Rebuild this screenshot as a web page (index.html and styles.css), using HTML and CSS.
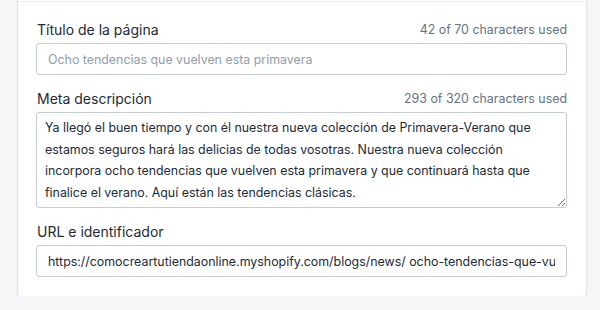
FILE: index.html
```html
<!DOCTYPE html>
<html lang="es">
<head>
<meta charset="UTF-8">
<title>SEO del artículo</title>
<link rel="stylesheet" href="styles.css">
</head>
<body>
    <div class="card">
        <div class="card-section">
            <div class="field">
                <div class="field-label">
                    <label for="seo-title">Título de la página</label>
                    <span class="counter">42 of 70 characters used</span>
                </div>
                <input id="seo-title" class="text-input" type="text" placeholder="Ocho tendencias que vuelven esta primavera">
            </div>

            <div class="field">
                <div class="field-label">
                    <label for="seo-description">Meta descripción</label>
                    <span class="counter">293 of 320 characters used</span>
                </div>
                <textarea id="seo-description" class="text-input text-area" rows="4">Ya llegó el buen tiempo y con él nuestra nueva colección de Primavera-Verano que
estamos seguros hará las delicias de todas vosotras. Nuestra nueva colección
incorpora ocho tendencias que vuelven esta primavera y que continuará hasta que
finalice el verano. Aquí están las tendencias clásicas.</textarea>
            </div>

            <div class="field">
                <div class="field-label">
                    <label for="seo-url">URL e identificador</label>
                </div>
                <input id="seo-url" class="text-input" type="text" value="https://comocreartutiendaonline.myshopify.com/blogs/news/ ocho-tendencias-que-vuelven-esta-primavera">
            </div>
        </div>
    </div>
</body>
</html>
```

FILE: styles.css
```css
body {
    margin: 0;
    padding: 0;
    background-color: #f4f6f8;
    font-family: Inter, "Noto Sans", sans-serif;
    color: #212b36;
}

/* Card */
.card {
    width: 568px;
    margin: -4px 0 0 18px;
    padding-top: 5px;
    background-color: #fff;
    border-radius: 0 0 3px 3px;
    box-shadow: 0 0 0 1px rgba(63, 63, 68, 0.05), 0 1px 3px 0 rgba(63, 63, 68, 0.15);
}

.card-section {
    border-top: 1px solid #ebeef0;
    padding: 18px 19px 19px 18px;
    display: flex;
    flex-direction: column;
    gap: 14px;
}

/* Fields */
.field-label {
    display: flex;
    justify-content: space-between;
    align-items: center;
    height: 20px;
    margin-bottom: 3px;
    line-height: 20px;
    font-size: 14px;
}

.field-label label {
    padding-left: 1px;
}

.counter {
    font-size: 12.4px;
    color: #637381;
}

.text-input {
    display: block;
    width: 100%;
    box-sizing: border-box;
    height: 32px;
    margin: 0;
    padding: 0 11px;
    border: 1px solid #c4cdd5;
    border-radius: 3px;
    font-family: inherit;
    font-size: 12.4px;
    color: #212b36;
    background-color: #fff;
}

.text-input::placeholder {
    color: #919eab;
}

.text-area {
    height: 96px;
    padding: 4px 8px 0;
    line-height: 21.7px;
    resize: vertical;
    white-space: pre;
    overflow: hidden;
}
```
